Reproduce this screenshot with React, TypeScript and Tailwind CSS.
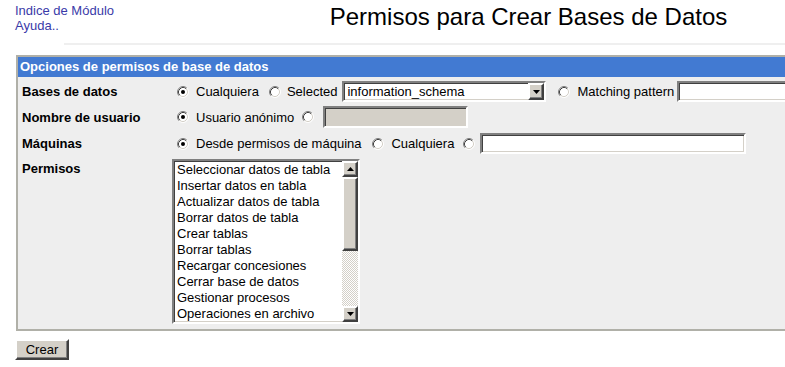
import React from 'react';

const Radio = ({ checked = false, className = '' }: { checked?: boolean; className?: string }) => (
  <svg width="12" height="12" viewBox="0 0 12 12" className={`shrink-0 ${className}`}>
    <circle cx="6" cy="6" r="5" fill="#fff" />
    <path d="M9.89 2.11A5.5 5.5 0 0 0 2.11 9.89" fill="none" stroke="#808080" />
    <path d="M2.11 9.89A5.5 5.5 0 0 0 9.89 2.11" fill="none" stroke="#fff" />
    <path d="M9.18 2.82A4.5 4.5 0 0 0 2.82 9.18" fill="none" stroke="#404040" />
    <path d="M2.82 9.18A4.5 4.5 0 0 0 9.18 2.82" fill="none" stroke="#d4d0c8" />
    {checked && <circle cx="6" cy="6" r="2" fill="#000" />}
  </svg>
);

const inset =
  'shrink-0 border-2 border-t-[#808080] border-l-[#808080] border-b-white border-r-white shadow-[inset_1px_1px_0_#404040,inset_-1px_-1px_0_#d4d0c8]';
const outset =
  'shrink-0 border-2 border-t-white border-l-white border-b-[#404040] border-r-[#404040] shadow-[inset_-1px_-1px_0_#808080] bg-[#d4d0c8]';

const Arrow = ({ up = false }: { up?: boolean }) => (
  <svg width="7" height="4" viewBox="0 0 7 4">
    {up ? <path d="M3.5 0L7 4H0z" fill="#000" /> : <path d="M0 0h7L3.5 4z" fill="#000" />}
  </svg>
);

const perms = [
  'Seleccionar datos de tabla',
  'Insertar datos en tabla',
  'Actualizar datos de tabla',
  'Borrar datos de tabla',
  'Crear tablas',
  'Borrar tablas',
  'Recargar concesiones',
  'Cerrar base de datos',
  'Gestionar procesos',
  'Operaciones en archivo',
];

const Label = ({ children }: { children: React.ReactNode }) => (
  <div className="w-[154px] shrink-0 pl-[4px] font-bold">{children}</div>
);

export default function App() {
  return (
    <div className="w-[785px] h-[367px] overflow-hidden bg-white text-[13px] leading-[15px] text-black font-['Liberation_Sans',Arial,sans-serif]">
      {/* top bar */}
      <div className="flex h-[43px]">
        <div className="w-[272px] shrink-0 pl-[15px] pt-[3px] text-[#3a3aa8]">
          <div>Indice de Módulo</div>
          <div>Ayuda..</div>
        </div>
        <div className="flex-1 text-center text-[24px] leading-[24px] pt-[5px] whitespace-nowrap">
          Permisos para Crear Bases de Datos
        </div>
      </div>
      <div className="ml-[64px] h-[2px] bg-[#efefef]" />

      {/* options table */}
      <div className="ml-[16px] mt-[10px] w-[800px] border-2 border-[#b0b0a8] bg-[#eeeeee]">
        <div className="h-[20px] bg-[#427ad2] pl-[2px] text-white font-bold leading-[20px]">
          Opciones de permisos de base de datos
        </div>

        <div className="flex items-center pt-[4px] pb-[2px] whitespace-nowrap">
          <Label>Bases de datos</Label>
          <Radio checked className="ml-[5px]" />
          <span className="ml-[7px] shrink-0">Cualquiera</span>
          <Radio className="ml-[10px]" />
          <span className="ml-[6px] shrink-0">Selected</span>
          <div className={`ml-[5px] w-[204px] h-[21px] bg-white flex items-center ${inset}`}>
            <span className="flex-1 pl-[3px]">information_schema</span>
            <div className={`w-[16px] h-[17px] flex items-center justify-center ${outset}`}>
              <Arrow />
            </div>
          </div>
          <Radio className="ml-[12px]" />
          <span className="ml-[7px] shrink-0">Matching pattern</span>
          <div className={`ml-[3px] w-[160px] h-[21px] bg-white ${inset}`} />
        </div>

        <div className="flex items-center pt-[2px] pb-[2px] whitespace-nowrap">
          <Label>Nombre de usuario</Label>
          <Radio checked className="ml-[5px]" />
          <span className="ml-[7px] shrink-0">Usuario anónimo</span>
          <Radio className="ml-[8px]" />
          <div className={`ml-[9px] w-[145px] h-[22px] bg-[#d4d0c8] ${inset}`} />
        </div>

        <div className="flex items-center pt-[3px] pb-[2px] whitespace-nowrap">
          <Label>Máquinas</Label>
          <Radio checked className="ml-[5px]" />
          <span className="ml-[7px] shrink-0">Desde permisos de máquina</span>
          <Radio className="ml-[11px]" />
          <span className="ml-[7px] shrink-0">Cualquiera</span>
          <Radio className="ml-[9px]" />
          <div className={`ml-[5px] w-[266px] h-[21px] bg-white ${inset}`} />
        </div>

        <div className="flex items-start pt-[3px] pb-[5px] whitespace-nowrap">
          <div className="pt-[2px]">
            <Label>Permisos</Label>
          </div>
          <div className={`w-[188px] h-[165px] bg-white flex ${inset}`}>
            <div className="flex-1 pl-[3px] pt-[1px] leading-[16px] overflow-hidden">
              {perms.map((p) => (
                <div key={p}>{p}</div>
              ))}
            </div>
            <div className="w-[16px] flex flex-col">
              <div className={`h-[16px] flex items-center justify-center ${outset}`}>
                <Arrow up />
              </div>
              <div className={`h-[74px] ${outset}`} />
              <div className="flex-1 bg-[repeating-conic-gradient(#d4d0c8_0_25%,#ffffff_0_50%)] bg-[length:2px_2px]" />
              <div className={`h-[16px] flex items-center justify-center ${outset}`}>
                <Arrow />
              </div>
            </div>
          </div>
        </div>
      </div>

      <button className={`ml-[15px] mt-[8px] w-[54px] h-[21px] text-[13px] leading-[15px] ${outset}`}>
        Crear
      </button>
    </div>
  );
}
